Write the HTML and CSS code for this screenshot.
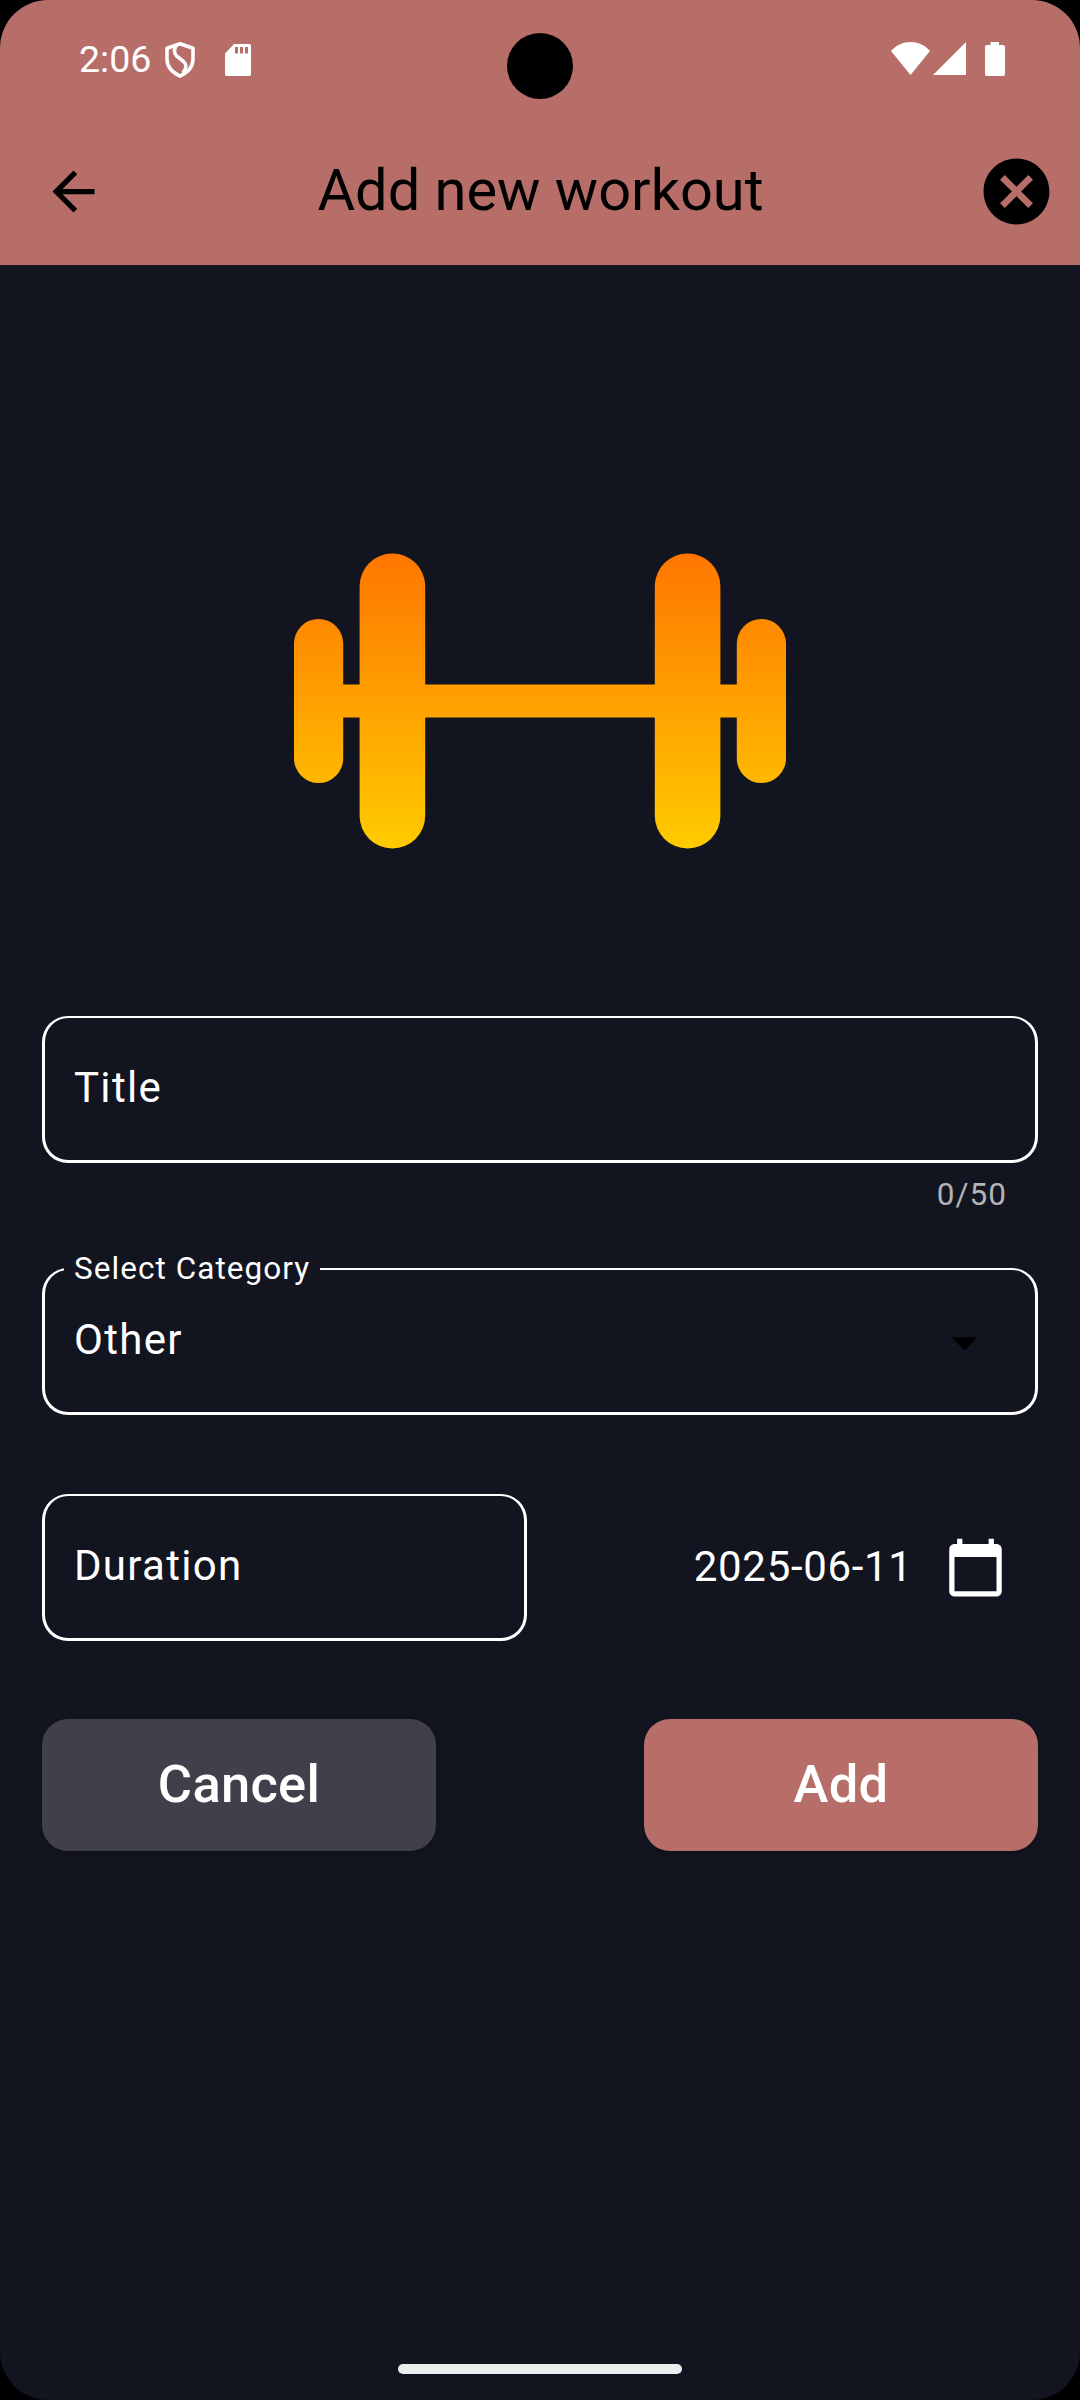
FILE: index.html
```html
<!DOCTYPE html>
<html lang="en">
<head>
<meta charset="utf-8">
<title>Add new workout</title>
<link rel="stylesheet" href="styles.css">
</head>
<body>
<div class="screen">
  <header class="top">
    <div class="status">
      <span class="time">2:06</span>
      <svg class="shield" viewBox="0 0 30 36"><path d="M15 1.800 28 6.300V17c0 7.500-5.500 13.600-13 17.200C7.500 30.600 2 24.500 2 17V6.300z" fill="none" stroke="#fff" stroke-width="3.600" stroke-linejoin="round"/><path d="M12 3C8.500 6 9 11.500 11.500 14L18.500 19.500C22 22.500 21.500 26.500 18 31" fill="none" stroke="#fff" stroke-width="3.600"/></svg>
      <svg class="sd" viewBox="0 0 26 32"><path fill="#fff" fill-rule="evenodd" d="M9 0h15q2 0 2 2v28q0 2-2 2H2q-2 0-2-2V9.500zM10 3v6.500h3V3zm5 0v6.500h3V3zm5 0v6.500h3V3z"/></svg>
      <svg class="wifi" viewBox="0 0 39 33"><path fill="#fff" d="M0 9C10.500-3 28.500-3 39 9L19.500 33z"/></svg>
      <svg class="signal" viewBox="0 0 33 33"><path fill="#fff" d="M33 0v33H0z"/></svg>
      <svg class="battery" viewBox="0 0 20 34"><path fill="#fff" d="M5.500 0h8.500v3h4q2 0 2 2v27q0 2-2 2H2q-2 0-2-2V5q0-2 2-2h3.500z"/></svg>
    </div>
    <div class="appbar">
      <svg class="back" viewBox="0 0 24 24"><path d="M20 11H7.830l5.590-5.590L12 4l-8 8 8 8 1.410-1.410L7.830 13H20z"/></svg>
      <h1 class="heading">Add new workout</h1>
      <svg class="close" viewBox="0 0 24 24"><path d="M12 2C6.470 2 2 6.470 2 12s4.470 10 10 10 10-4.470 10-10S17.530 2 12 2zm5 13.590L15.590 17 12 13.410 8.410 17 7 15.590 10.590 12 7 8.410 8.410 7 12 10.590 15.590 7 17 8.410 13.410 12z"/></svg>
    </div>
  </header>
  <main class="content">
    <svg class="dumbbell" viewBox="0 0 30 18">
      <defs><linearGradient id="heat" gradientUnits="userSpaceOnUse" x1="0" y1="0" x2="0" y2="18"><stop offset="0" stop-color="#ff7600"/><stop offset="1" stop-color="#ffcb00"/></linearGradient></defs>
      <g fill="url(#heat)"><rect x="0" y="4" width="3" height="10" rx="1.500"/><rect x="4" y="0" width="4" height="18" rx="2"/><rect x="22" y="0" width="4" height="18" rx="2"/><rect x="27" y="4" width="3" height="10" rx="1.500"/><path d="M2.900 8h24.200v2H2.900z"/></g>
    </svg>
    <div class="field"><span class="value">Title</span></div>
    <div class="counter">0/50</div>
    <fieldset class="field select">
      <legend class="label">Select Category</legend>
      <span class="value">Other</span>
      <svg class="caret" viewBox="0 0 24 24"><path d="M7 10l5 5 5-5z"/></svg>
    </fieldset>
    <div class="row">
      <div class="field duration"><span class="value">Duration</span></div>
      <div class="date">
        <span class="day">2025-06-11</span>
        <svg class="calendar" viewBox="0 0 24 24"><path fill="#fff" d="M20 3h-1V1h-2v2H7V1H5v2H4c-1.100 0-2 .9-2 2v16c0 1.100.9 2 2 2h16c1.100 0 2-.9 2-2V5c0-1.100-.9-2-2-2zm0 18H4V8h16z"/></svg>
      </div>
    </div>
    <div class="actions">
      <button class="button cancel">Cancel</button>
      <button class="button add">Add</button>
    </div>
  </main>
  <div class="home"></div>
  <div class="camera"></div>
</div>
</body>
</html>
```
FILE: styles.css
```css
* { box-sizing: border-box; }

body {
  margin: 0;
  background: #000;
  font-family: Roboto, sans-serif;
  color: #fff;
}

svg { display: block; flex: none; }

.screen {
  position: relative;
  display: flex;
  flex-direction: column;
  width: 1080px;
  height: 2400px;
  background: #12141f;
  border-radius: 48px;
  overflow: hidden;
}

.top {
  height: 265px;
  background: #b76e68;
}

.status {
  display: flex;
  align-items: flex-start;
  height: 118px;
  padding: 42px 75px 0 79px;
}

.time {
  width: 86px;
  margin-top: -6px;
  font-size: 37.5px;
  line-height: 46px;
}

.shield { width: 30px; height: 36px; }
.sd { width: 26px; height: 32px; margin: 2px 0 0 30px; }
.wifi { width: 39px; height: 33px; margin-left: auto; }
.signal { width: 33px; height: 33px; margin-left: 3px; }
.battery { width: 20px; height: 34px; margin-left: 19px; }

.appbar {
  display: flex;
  align-items: center;
  justify-content: space-between;
  height: 147px;
  padding: 0 24px 0 42px;
}

.back { width: 63px; height: 63px; }
.close { width: 79px; height: 79px; }

.heading {
  margin: 0 0 3px -1px;
  font-size: 57.75px;
  font-weight: 400;
  line-height: 74px;
  color: #000;
  white-space: nowrap;
}

.content {
  display: flex;
  flex-direction: column;
  padding: 288px 42px 0;
}

.dumbbell {
  width: 492px;
  height: 296px;
  align-self: center;
}

.field {
  display: flex;
  align-items: flex-start;
  height: 147px;
  margin: 167px 0 0;
  padding: 45px 29px 0;
  border: 3px solid #fff;
  border-top-width: 2px;
  border-radius: 26px;
}

.value {
  font-size: 42px;
  line-height: 50px;
  letter-spacing: 1.31px;
}

.counter {
  height: 63px;
  margin: 11px 31px 0 0;
  font-size: 31.5px;
  line-height: 42px;
  letter-spacing: 1.05px;
  text-align: right;
  color: #b3b3b8;
}

.select {
  height: 167px;
  margin: 11px 0 0;
  padding: 25px 39px 0 29px;
  min-width: 0;
}

.label {
  margin-left: -10px;
  padding: 0 10px;
  font-size: 31.5px;
  line-height: 42px;
  letter-spacing: 1.05px;
}

.caret {
  width: 63px;
  height: 63px;
  margin: -4px 0 0 auto;
}

.row {
  display: flex;
  justify-content: space-between;
  margin-top: 79px;
}

.duration { width: 485px; margin: 0; }

.date {
  display: flex;
  align-items: center;
  gap: 31px;
  height: 147px;
  padding-right: 31.5px;
  font-size: 42px;
  letter-spacing: 0.66px;
}

.day { margin-bottom: 3px; }
.calendar { width: 63px; height: 63px; }

.actions {
  display: flex;
  justify-content: space-between;
  margin-top: 78px;
}

.button {
  width: 394px;
  height: 132px;
  padding: 0 0 2px;
  border: 0;
  border-radius: 26px;
  box-shadow: 0 2px 4px rgba(0, 0, 0, 0.2);
  font: 500 52.5px/62px Roboto, sans-serif;
  letter-spacing: 0.26px;
  color: #fff;
}

.cancel { background: #413f4b; }
.add { background: #b76e68; }

.home {
  width: 284px;
  height: 10px;
  margin: auto auto 26px;
  border-radius: 5px;
  background: #ecedef;
}

.camera {
  position: absolute;
  top: 33px;
  left: 507px;
  width: 66px;
  height: 66px;
  border-radius: 50%;
  background: #000;
}
```
